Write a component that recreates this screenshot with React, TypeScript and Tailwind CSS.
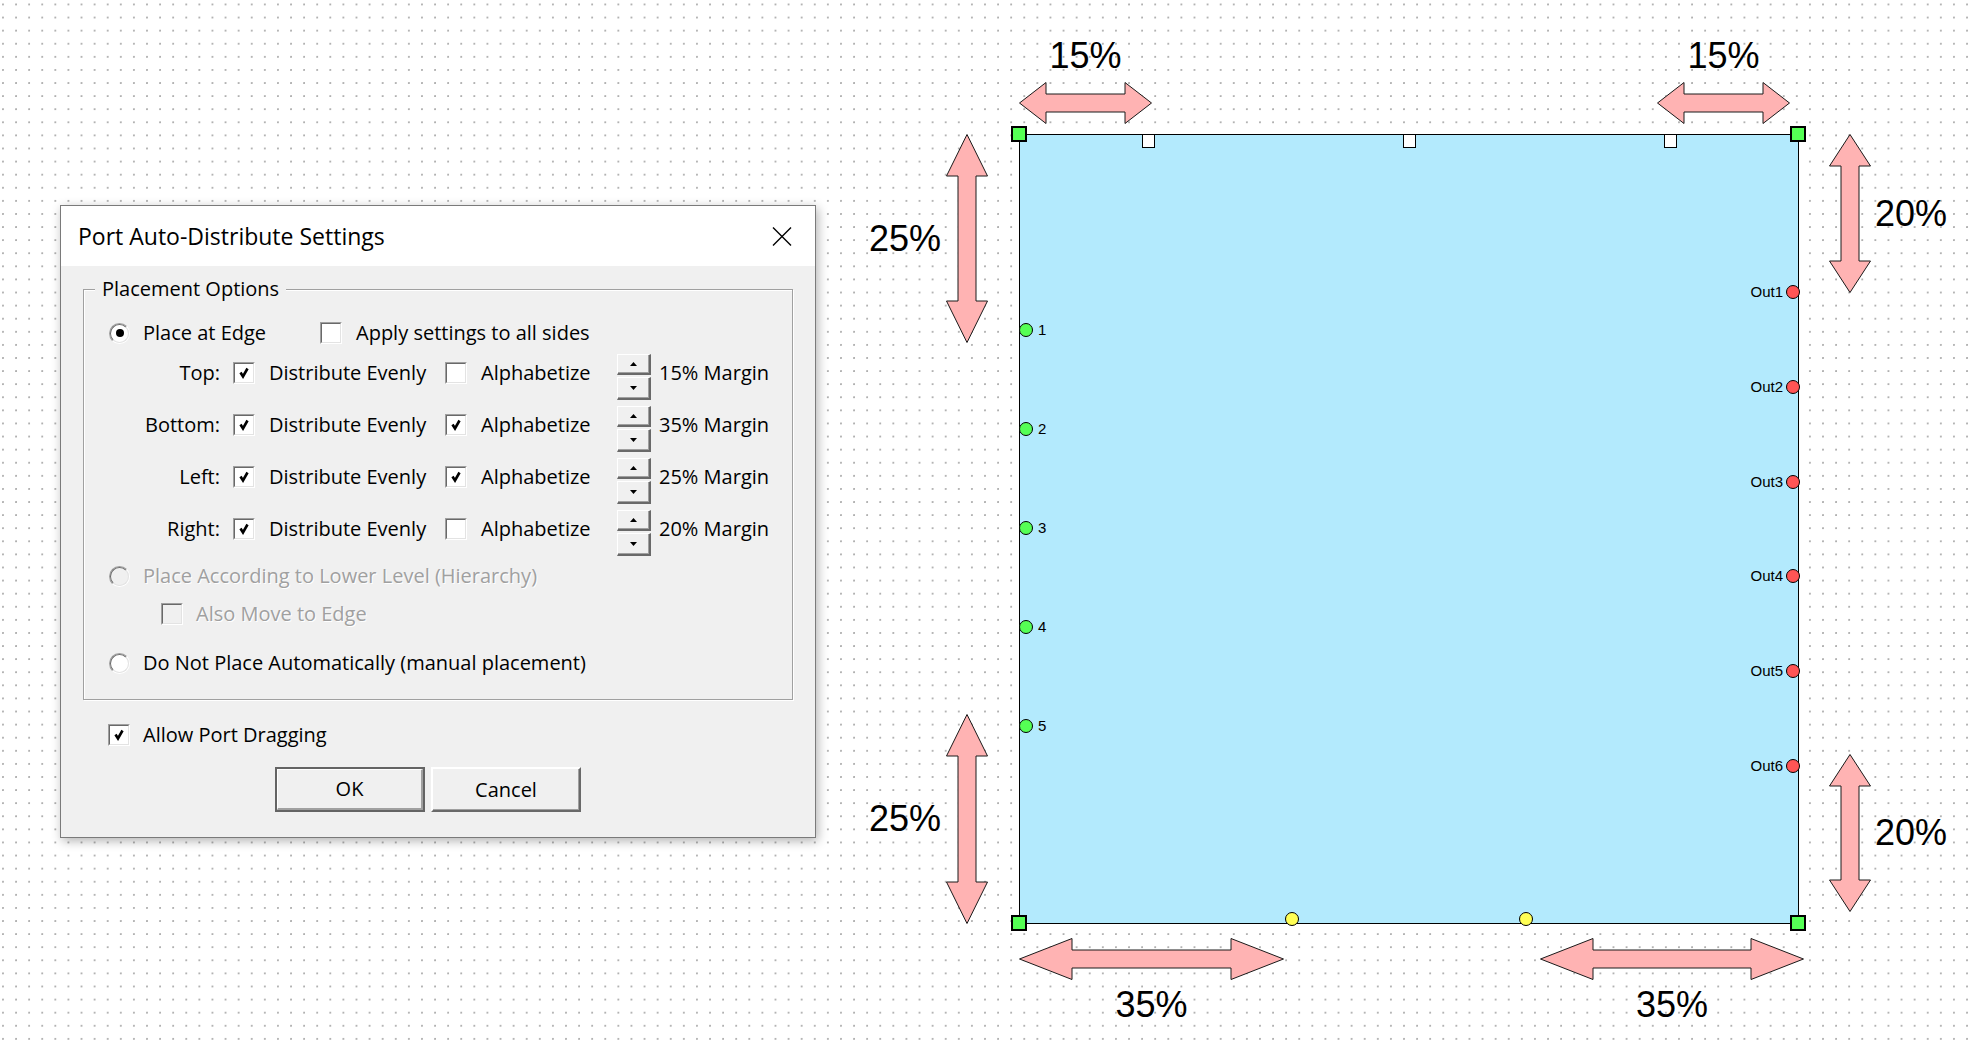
import React from "react";

type CheckProps = { on?: boolean; off?: boolean };

const Check = ({ on = false, off = false }: CheckProps) => (
  <span className="flex h-[22px] w-[22px] shrink-0 border border-t-[#a0a0a0] border-l-[#a0a0a0] border-r-white border-b-white">
    <span
      className={`flex flex-1 items-center justify-center border border-t-[#696969] border-l-[#696969] border-r-[#e3e3e3] border-b-[#e3e3e3] ${
        off ? "bg-[#f0f0f0]" : "bg-white"
      }`}
    >
      {on && (
        <svg width="12" height="12" viewBox="0 0 12 12">
          <path d="M2.5 5.5 L5 9.5 L9.5 1.5" fill="none" stroke="#000" strokeWidth="2.6" />
        </svg>
      )}
    </span>
  </span>
);

const Radio = ({ on = false, off = false }: CheckProps) => (
  <span className="flex h-[21px] w-[21px] shrink-0 rounded-full border border-t-[#a0a0a0] border-l-[#a0a0a0] border-r-white border-b-white">
    <span
      className={`flex flex-1 items-center justify-center rounded-full border border-t-[#696969] border-l-[#696969] border-r-[#e3e3e3] border-b-[#e3e3e3] ${
        off ? "bg-[#f0f0f0]" : "bg-white"
      }`}
    >
      {on && <span className="h-[8px] w-[8px] rounded-full bg-black" />}
    </span>
  </span>
);

const Spin = () => (
  <div className="mt-[2px] flex w-[34px] shrink-0 flex-col gap-[2px]">
    <div className="flex h-[21px] items-center justify-center border-t border-l border-white border-r-2 border-b-2 border-r-[#696969] border-b-[#696969] bg-[#f0f0f0] shadow-[inset_-1px_-1px_0_#a0a0a0]">
      <svg width="7" height="4" viewBox="0 0 7 4">
        <path d="M0 4 L3.5 0 L7 4Z" fill="#000" />
      </svg>
    </div>
    <div className="flex h-[23px] items-center justify-center border-t border-l border-white border-r-2 border-b-2 border-r-[#696969] border-b-[#696969] bg-[#f0f0f0] shadow-[inset_-1px_-1px_0_#a0a0a0]">
      <svg width="7" height="4" viewBox="0 0 7 4">
        <path d="M0 0 L3.5 4 L7 0Z" fill="#000" />
      </svg>
    </div>
  </div>
);

type SideProps = { label: string; dist: boolean; alpha: boolean; pct: string };

const Side = ({ label, dist, alpha, pct }: SideProps) => (
  <div className="flex h-[52px] items-start">
    <div className="flex h-[42px] items-center">
      <span className="w-[111px] text-right">{label}</span>
      <span className="ml-[13px]">
        <Check on={dist} />
      </span>
      <span className="ml-[14px] w-[176px]">Distribute Evenly</span>
      <Check on={alpha} />
      <span className="ml-[14px] w-[136px]">Alphabetize</span>
    </div>
    <Spin />
    <div className="ml-[8px] flex h-[42px] items-center">{pct} Margin</div>
  </div>
);

type ArrowProps = { len: number; vertical?: boolean };

const Arrow = ({ len, vertical = false }: ArrowProps) => {
  const hd = Math.round(len * 0.2);
  const pts = [
    [0.5, 21],
    [hd, 0.5],
    [hd, 12],
    [len - hd, 12],
    [len - hd, 0.5],
    [len - 0.5, 21],
    [len - hd, 41.5],
    [len - hd, 30],
    [hd, 30],
    [hd, 41.5],
  ];
  const p = pts.map(([a, b]) => (vertical ? `${b},${a}` : `${a},${b}`)).join(" ");
  const w = vertical ? 42 : len;
  const h = vertical ? len : 42;
  return (
    <svg className="block shrink-0" width={w} height={h} viewBox={`0 0 ${w} ${h}`}>
      <polygon points={p} fill="#ffb3b3" stroke="#1a1a1a" strokeWidth="1" />
    </svg>
  );
};

const Pct = ({ children }: { children: string }) => (
  <span className="block text-center text-[36px] leading-none">{children}</span>
);

const InPort = ({ n }: { n: string }) => (
  <div className="flex h-[14px] items-center gap-[5px]">
    <span className="h-[14px] w-[14px] rounded-full border border-black bg-[#55ff55]" />
    <span>{n}</span>
  </div>
);

const OutPort = ({ n }: { n: string }) => (
  <div className="flex h-[14px] items-center justify-end gap-[3px]">
    <span>{n}</span>
    <span className="h-[14px] w-[14px] rounded-full border border-black bg-[#ff5555]" />
  </div>
);

const dis = "text-[#a0a0a0] [text-shadow:1px_1px_0_#fff]";

export default function App() {
  return (
    <div className="relative h-[1044px] w-[1972px] overflow-hidden bg-white bg-[radial-gradient(circle_at_1px_1px,#b0b0b0_0.7px,transparent_1.1px)] bg-[length:13.1px_13.1px] bg-[position:2px_3.5px]">
      {/* dialog window */}
      <div className="absolute left-[60px] top-[205px] flex h-[633px] w-[756px] flex-col border border-[#7a7a7a] bg-[#f0f0f0] font-['Segoe_UI','Open_Sans',sans-serif] text-[20px] text-black shadow-[2px_3px_10px_rgba(0,0,0,0.3)]">
        <div className="flex h-[60px] shrink-0 items-center justify-between bg-white pl-[17px] pr-[23px] text-[23px]">
          <span>Port Auto-Distribute Settings</span>
          <svg width="20" height="19" viewBox="0 0 20 19">
            <path d="M1 0.5 L19 18.5 M19 0.5 L1 18.5" stroke="#000" strokeWidth="1.4" />
          </svg>
        </div>

        <div className="flex flex-col px-[22px] pt-[23px]">
          <div className="relative flex flex-col border border-[#a0a0a0] pb-[9px] pl-[25px] pt-[24px] shadow-[inset_1px_1px_0_#fff,1px_1px_0_#fff]">
            <span className="absolute left-[11px] top-[-14px] bg-[#f0f0f0] px-[7px] leading-[26px]">
              Placement Options
            </span>

            <div className="flex h-[38px] items-center">
              <Radio on />
              <span className="ml-[13px] w-[177px]">Place at Edge</span>
              <Check />
              <span className="ml-[14px]">Apply settings to all sides</span>
            </div>

            <Side label="Top:" dist alpha={false} pct="15%" />
            <Side label="Bottom:" dist alpha pct="35%" />
            <Side label="Left:" dist alpha pct="25%" />
            <Side label="Right:" dist alpha={false} pct="20%" />

            <div className="flex h-[32px] items-center">
              <Radio off />
              <span className={`ml-[13px] ${dis}`}>Place According to Lower Level (Hierarchy)</span>
            </div>
            <div className="flex h-[44px] items-center pl-[52px]">
              <Check off />
              <span className={`ml-[13px] ${dis}`}>Also Move to Edge</span>
            </div>
            <div className="flex h-[54px] items-center">
              <Radio />
              <span className="ml-[13px]">Do Not Place Automatically (manual placement)</span>
            </div>
          </div>

          <div className="mt-[20px] flex h-[30px] items-center pl-[25px]">
            <Check on />
            <span className="ml-[13px]">Allow Port Dragging</span>
          </div>

          <div className="mt-[17px] flex gap-[6px] pl-[192px]">
            <button className="h-[45px] w-[150px] border-2 border-[#646464] bg-[#f0f0f0] p-0">
              <span className="flex h-full items-center justify-center border-t border-l border-white border-r-2 border-b-2 border-r-[#a0a0a0] border-b-[#a0a0a0]">
                OK
              </span>
            </button>
            <button className="flex h-[45px] w-[150px] items-center justify-center border-t-2 border-l-2 border-white border-r-2 border-b-2 border-r-[#696969] border-b-[#696969] bg-[#f0f0f0] shadow-[inset_-1px_-1px_0_#a0a0a0]">
              Cancel
            </button>
          </div>
        </div>
      </div>

      {/* block diagram with margin annotations */}
      <div className="absolute left-[869px] top-[38px] flex flex-col font-['Liberation_Sans',Arial,sans-serif] text-black">
        <div className="flex items-end pl-[150px]">
          <div className="flex w-[133px] flex-col gap-[8px]">
            <Pct>15%</Pct>
            <Arrow len={133} />
          </div>
          <div className="ml-[505px] flex w-[133px] flex-col gap-[8px]">
            <Pct>15%</Pct>
            <Arrow len={133} />
          </div>
        </div>

        <div className="mt-[10px] flex items-start">
          <div className="flex w-[119px] flex-col gap-[371px]">
            <div className="flex items-center justify-between">
              <Pct>25%</Pct>
              <Arrow len={209} vertical />
            </div>
            <div className="flex items-center justify-between">
              <Pct>25%</Pct>
              <Arrow len={210} vertical />
            </div>
          </div>

          <div className="relative ml-[31px] flex h-[790px] w-[780px] flex-col border border-black bg-[#b3eafd] text-[15px] leading-[18px]">
            <span className="absolute left-[-9px] top-[-9px] h-[16px] w-[16px] border-2 border-black bg-[#55ff55]" />
            <span className="absolute right-[-8px] top-[-9px] h-[16px] w-[16px] border-2 border-black bg-[#55ff55]" />
            <span className="absolute bottom-[-8px] left-[-9px] h-[16px] w-[16px] border-2 border-black bg-[#55ff55]" />
            <span className="absolute bottom-[-8px] right-[-8px] h-[16px] w-[16px] border-2 border-black bg-[#55ff55]" />

            <div className="-mt-px flex gap-[248px] pl-[122px]">
              <span className="h-[14px] w-[13px] border border-black bg-white" />
              <span className="h-[14px] w-[13px] border border-black bg-white" />
              <span className="h-[14px] w-[13px] border border-black bg-white" />
            </div>

            <div className="flex justify-between">
              <div className="-ml-px mt-[175px] flex flex-col gap-[85px]">
                <InPort n="1" />
                <InPort n="2" />
                <InPort n="3" />
                <InPort n="4" />
                <InPort n="5" />
              </div>
              <div className="-mr-[2px] mt-[137px] flex flex-col gap-[80.8px]">
                <OutPort n="Out1" />
                <OutPort n="Out2" />
                <OutPort n="Out3" />
                <OutPort n="Out4" />
                <OutPort n="Out5" />
                <OutPort n="Out6" />
              </div>
            </div>

            <div className="-mb-[3px] mt-auto flex gap-[220px] pl-[265px]">
              <span className="h-[14px] w-[14px] rounded-full border border-black bg-[#ffff55]" />
              <span className="h-[14px] w-[14px] rounded-full border border-black bg-[#ffff55]" />
            </div>
          </div>

          <div className="ml-[30px] flex w-[117px] flex-col gap-[461px]">
            <div className="flex items-center gap-[4px]">
              <Arrow len={159} vertical />
              <Pct>20%</Pct>
            </div>
            <div className="flex items-center gap-[4px]">
              <Arrow len={158} vertical />
              <Pct>20%</Pct>
            </div>
          </div>
        </div>

        <div className="mt-[14px] flex items-start pl-[150px]">
          <div className="flex w-[265px] flex-col gap-[7px]">
            <Arrow len={265} />
            <Pct>35%</Pct>
          </div>
          <div className="ml-[256px] flex w-[264px] flex-col gap-[7px]">
            <Arrow len={264} />
            <Pct>35%</Pct>
          </div>
        </div>
      </div>
    </div>
  );
}
